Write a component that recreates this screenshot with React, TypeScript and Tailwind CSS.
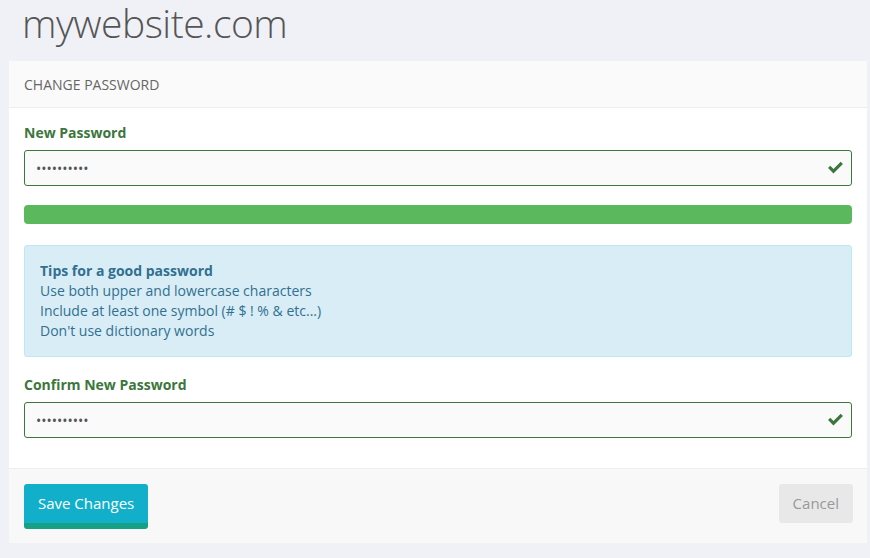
function PasswordField({ label }: { label: string }) {
  return (
    <div className="flex flex-col">
      <label className="text-[14px] font-bold leading-[20px] text-[#3c763d]">{label}</label>
      <div className="relative mt-[7px]">
        <input
          type="password"
          readOnly
          value="abcdefghij"
          className="h-[36px] w-full rounded-[3px] border border-[#3c763d] bg-[#fafafa] px-[11px] text-[14px] text-[#555] outline-none"
        />
        <svg
          viewBox="0 0 16 14"
          className="absolute right-[9px] top-[11px] h-[13px] w-[15px]"
          fill="#3c763d"
        >
          <path d="M0 7.6l2.4-2.4 3.4 3.4L13.6 0.8 16 3.2 5.8 13.4z" />
        </svg>
      </div>
    </div>
  );
}

export default function App() {
  return (
    <div className="min-h-[558px] bg-[#eff1f6] pt-px font-['Open_Sans',sans-serif]">
      <h1 className="-mt-[2px] pl-[22px] text-[39px] font-light leading-[48px] tracking-[-0.5px] text-[#555]">
        mywebsite.com
      </h1>
      <div className="ml-[9px] mr-[3px] mt-[14px] bg-white">
        <div className="flex h-[47px] items-center border-b border-[#eeeeee] bg-[#fafafa] px-[15px] text-[14px] uppercase text-[#666]">
          Change Password
        </div>
        <div className="px-[15px] pt-[15px] pb-[30px]">
          <PasswordField label="New Password" />
          <div className="mt-[19px] h-[19px] rounded-[4px] bg-[#5cb85c]" />
          <div className="mt-[21px] rounded-[3px] border border-[#bce8f1] bg-[#d9edf7] px-[15px] py-[15px] text-[14px] leading-[20px] text-[#31708f]">
            <div className="font-bold">Tips for a good password</div>
            <div>Use both upper and lowercase characters</div>
            <div>Include at least one symbol (# $ ! % &amp; etc...)</div>
            <div>Don't use dictionary words</div>
          </div>
          <div className="mt-[18px]">
            <PasswordField label="Confirm New Password" />
          </div>
        </div>
        <div className="flex items-start justify-between border-t border-[#eeeeee] bg-[#f8f8f9] pl-[15px] pr-[14px] pt-[15px] pb-[14px]">
          <button className="h-[45px] rounded-[3px] border-b-[6px] border-[#16a085] bg-[#12afcb] px-[14px] text-[15px] text-white">
            Save Changes
          </button>
          <button className="h-[39px] rounded-[3px] bg-[#e8e8e8] px-[14px] text-[15px] text-[#999]">
            Cancel
          </button>
        </div>
      </div>
    </div>
  );
}
